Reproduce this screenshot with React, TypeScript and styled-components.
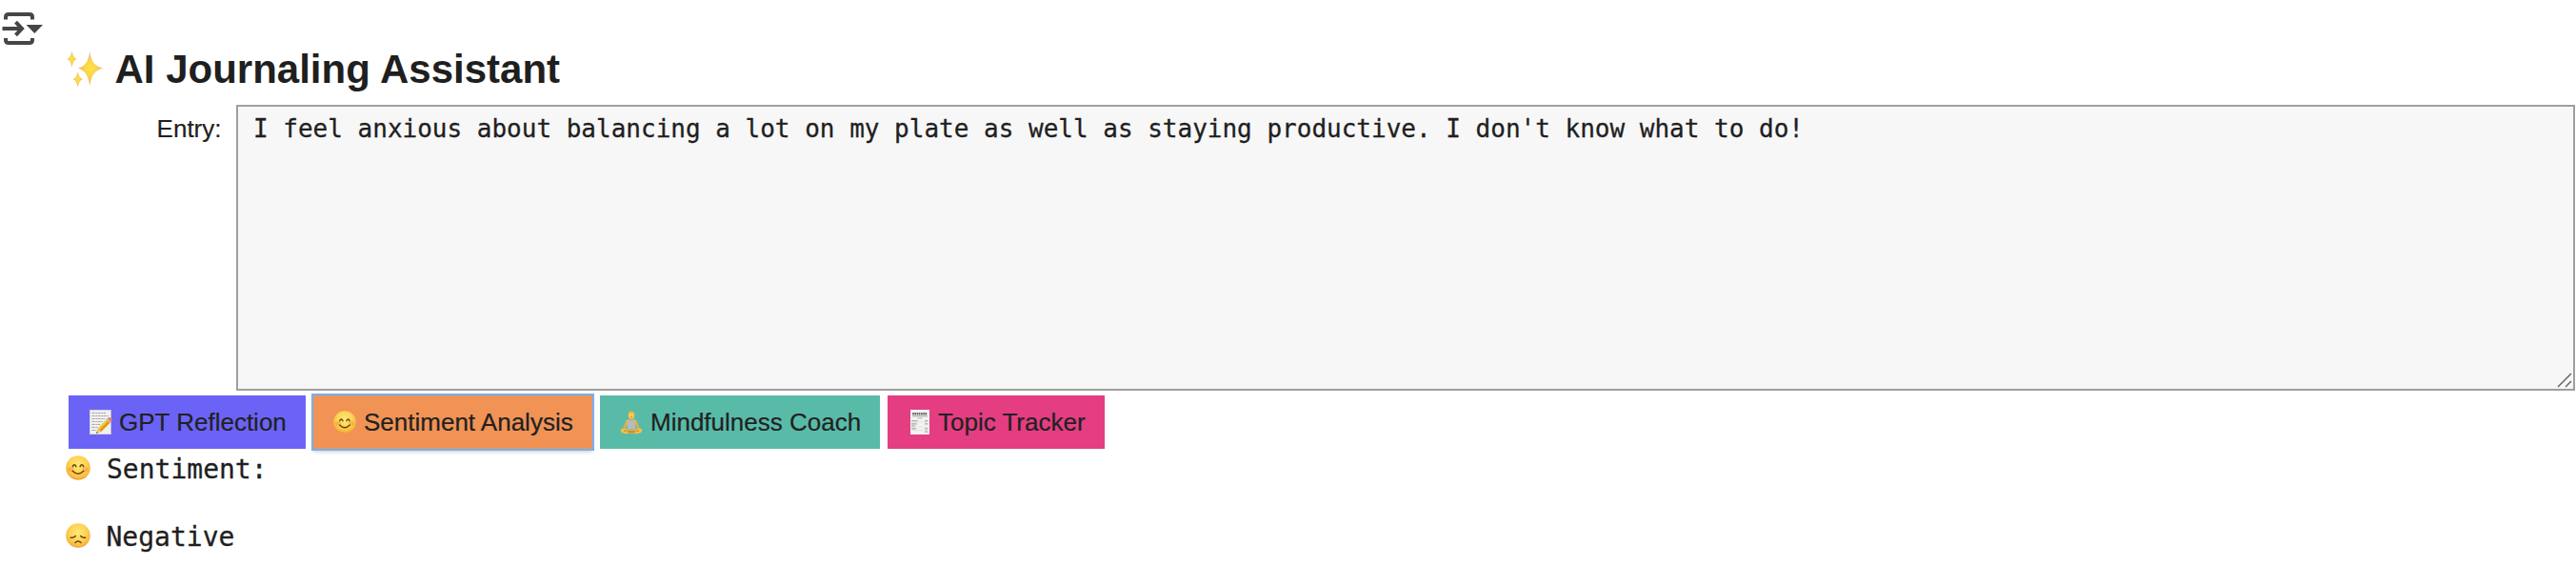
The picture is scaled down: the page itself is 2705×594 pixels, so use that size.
import React from "react";
import styled, { createGlobalStyle } from "styled-components";

const GlobalStyle = createGlobalStyle`
  *, *::before, *::after { box-sizing: border-box; }
  body {
    margin: 0;
    background: #ffffff;
    color: #1f1f1f;
    font-family: "Liberation Sans", Arial, sans-serif;
  }
`;

const Cell = styled.main`
  display: flex;
  align-items: flex-start;
  width: 100%;
  height: 594px;
  overflow: hidden;
`;

const Gutter = styled.aside`
  flex: 0 0 68px;
  padding: 13px 0 0 2px;
`;

const Output = styled.section`
  flex: 1;
  min-width: 0;
  padding-top: 48px;
`;

const Title = styled.h2`
  display: flex;
  align-items: center;
  height: 48px;
  margin: 0 0 14px;
  padding-left: 2px;
  font-size: 42px;
  line-height: 48px;
  font-weight: 700;
  letter-spacing: 0;
  white-space: nowrap;
`;

const TitleText = styled.span`
  margin-left: 11.5px;
  padding-top: 2px;
`;

const EntryRow = styled.div`
  display: flex;
  align-items: flex-start;
  height: 300px;
  margin-right: 1px;
`;

const EntryLabel = styled.label`
  flex: 0 0 180px;
  padding: 9px 15.5px 0 0;
  text-align: right;
  font-size: 26px;
  line-height: 32px;
  -webkit-text-stroke: 0.2px currentColor;
`;

const EntryBox = styled.div`
  position: relative;
  flex: 1;
  height: 300px;
  padding: 7px 16px;
  border: 2px solid #9e9e9e;
  background: #f7f7f7;
  font-family: "DejaVu Sans Mono", monospace;
  font-size: 26px;
  line-height: 32px;
  white-space: pre-wrap;
  -webkit-text-stroke: 0.3px currentColor;
`;

const ResizeGrip = styled.svg`
  position: absolute;
  right: 1px;
  bottom: 1px;
`;

const Actions = styled.div`
  display: flex;
  gap: 8px;
  margin: 5px 0 0 4px;
`;

const ActionButton = styled.button<{
  $color: string;
  $width: number;
  $focused?: boolean;
}>`
  display: flex;
  align-items: center;
  width: ${(p) => p.$width}px;
  height: 56px;
  padding: 0 0 0 20px;
  border: 0;
  background: ${(p) => p.$color};
  color: #212121;
  font-family: inherit;
  font-size: 26px;
  line-height: 32px;
  white-space: nowrap;
  -webkit-text-stroke: 0.2px currentColor;
  outline: ${(p) => (p.$focused ? "2px solid #73b1f4" : "none")};
  box-shadow: ${(p) => (p.$focused ? "0 3px 4px 0 rgba(0, 0, 0, 0.22)" : "none")};
`;

const ButtonText = styled.span`
  margin-left: 8px;
`;

const Result = styled.div`
  margin-top: 3px;
  font-family: "DejaVu Sans Mono", monospace;
  font-size: 28px;
  -webkit-text-stroke: 0.3px currentColor;
`;

const ResultLine = styled.p`
  display: flex;
  align-items: center;
  height: 34px;
  margin: 0 0 37px;
  line-height: 34px;
`;

const ResultText = styled.span<{ $gap: number }>`
  margin-left: ${(p) => p.$gap}px;
  padding-top: 4px;
`;

const OutputIcon = () => (
  <svg width="44" height="35" viewBox="2 13 44 35">
    <g fill="none" stroke="#444746" strokeWidth="4">
      <path d="M6 20.5V18Q6 15 9 15H31Q34 15 34 18V20.5" />
      <path d="M6 40V42Q6 45 9 45H31Q34 45 34 42V40" />
      <path d="M2.5 30H22" />
      <path d="M16.5 23.2L23 30L16.5 36.8" />
    </g>
    <path d="M27.5 26H45L36.3 35Z" fill="#444746" />
  </svg>
);

const Sparkles = () => (
  <svg width="39" height="39" viewBox="0 0 39 39">
    <defs>
      <radialGradient id="spark">
        <stop offset="0" stopColor="#ffe24a" />
        <stop offset="0.5" stopColor="#f8d34c" />
        <stop offset="1" stopColor="#efa568" />
      </radialGradient>
    </defs>
    <g fill="url(#spark)">
      <path d="M24.2 1Q26 17 38.5 18.5Q26 21 24.2 37.5Q22.4 21 11.5 18.5Q22.4 17 24.2 1Z" />
      <path d="M5.5 0.5Q6.8 8 10.5 9Q6.8 10.2 5.5 17.5Q4.2 10.2 0.5 9Q4.2 8 5.5 .5Z" />
      <path d="M11.7 22.5Q13 29 17 30Q13 31.5 11.7 38.5Q10.4 31.5 6.5 30Q10.4 29 11.7 22.5Z" />
    </g>
  </svg>
);

const FaceFill = ({ id }: { id: string }) => (
  <defs>
    <radialGradient id={id} cx="50%" cy="38%" r="64%">
      <stop offset="0" stopColor="#ffe978" />
      <stop offset="0.55" stopColor="#fdd354" />
      <stop offset="0.83" stopColor="#f8ba3f" />
      <stop offset="1" stopColor="#e79430" />
    </radialGradient>
  </defs>
);

const SmilingFace = ({ size, id }: { size: number; id: string }) => (
  <svg width={size} height={size} viewBox="0 0 26 26">
    <FaceFill id={id} />
    <circle cx="13" cy="13" r="12.8" fill={`url(#${id})`} />
    <ellipse cx="5.3" cy="14.5" rx="3.4" ry="2.6" fill="#f58b37" opacity="0.4" />
    <ellipse cx="20.7" cy="14.5" rx="3.4" ry="2.6" fill="#f58b37" opacity="0.4" />
    <g fill="none" stroke="#6b400c" strokeLinecap="round" strokeWidth="1.5">
      <path d="M7.3 11.6Q9.1 7.8 10.9 11.6" />
      <path d="M15.1 11.6Q16.9 7.8 18.7 11.6" />
      <path d="M7.2 16.3Q13 22.2 18.8 16.3" />
    </g>
  </svg>
);

const SadFace = () => (
  <svg width="26" height="26" viewBox="0 0 26 26">
    <FaceFill id="sad" />
    <circle cx="13" cy="13" r="12.8" fill="url(#sad)" />
    <g fill="none" stroke="#6b400c" strokeLinecap="round" strokeWidth="1.5">
      <path d="M5.3 15.2Q8.5 15.8 10.3 13.5" />
      <path d="M20.7 15.2Q17.5 15.8 15.7 13.5" />
      <path d="M10 20.5Q13 17.5 16 20.5" />
    </g>
  </svg>
);

const Memo = () => (
  <svg width="24" height="26" viewBox="0 0 24 26">
    <rect x="0.3" y="0.3" width="22" height="25.4" fill="#f1f1ef" stroke="#d9d9dc" strokeWidth="0.6" />
    <g stroke="#a5a5a5" strokeWidth="1" strokeDasharray="3 0.8 1.6 0.6">
      <path d="M2.5 3.5H17M2.5 6.5H20M2.5 9.5H16M2.5 12.5H14M2.5 15.5H11M2.5 18.5H9M2.5 21.5H7" />
    </g>
    <path d="M7.2 24.8L8.6 19.8L18.5 9.6L22.2 13L12.2 23Z" fill="#f7c52d" />
    <path d="M10.3 21.2L20.2 11.2L22.2 13L12.2 23Z" fill="#d99a1d" />
    <path d="M7.2 24.8L8.6 19.8L12.2 23Z" fill="#e9c797" />
    <path d="M7.2 24.8L7.7 23L9 24.2Z" fill="#333333" />
    <path d="M17.5 10.6L18.8 9.3L22.5 12.7L21.2 14Z" fill="#b9bdc3" />
    <path d="M18.8 9.3L20.2 8Q21.5 7.5 23 9Q24.2 10.5 23.6 11.5L22.5 12.7Z" fill="#ef7968" />
  </svg>
);

const Lotus = () => (
  <svg width="24" height="25" viewBox="0 0 24 25">
    <path d="M8.2 9.5Q5.8 9.5 5.5 13L3.5 18L1.5 20.2L4 20.6L6.8 16L9 13H15L17.2 16L20 20.6L22.5 20.2L20.5 18L18.5 13Q18.2 9.5 15.8 9.5Z" fill="#e8b044" />
    <path d="M10.4 7H13.6V10.5H10.4Z" fill="#dda23a" />
    <ellipse cx="12" cy="4.8" rx="3.2" ry="3.9" fill="#f8cc57" />
    <path d="M8.7 4.5Q8.3 .4 12 .4Q15.7 .4 15.3 4.5Q14.2 2.4 12 2.6Q9.8 2.4 8.7 4.5Z" fill="#efb03a" />
    <path d="M10.7 6.5Q12 7.5 13.3 6.5" fill="none" stroke="#9b6418" strokeWidth="0.6" />
    <path d="M8 9.6L9.4 9.2Q12 12 14.6 9.2L16 9.6L16.4 19.5H7.6Z" fill="#b9b9c1" />
    <path d="M1 19.2Q5 18 8 19.2L12 20.5L16 19.2Q19 18 23 19.2Q24 22.5 21 23.5Q16 25 12 23.2Q8 25 3 23.5Q0 22.5 1 19.2Z" fill="#f3bd49" />
    <path d="M4 21.2Q9 20.3 12 22Q15 20.3 20 21.2M8 23Q12 21.5 16 23" fill="none" stroke="#b37b24" strokeWidth="0.8" />
  </svg>
);

const Receipt = () => (
  <svg width="20" height="26" viewBox="0 0 20 26">
    <rect width="20" height="26" fill="#f2f2f1" />
    <path d="M2.2 4.3H17.8" stroke="#666666" strokeWidth="2.6" strokeDasharray="1.6 0.6" />
    <path d="M2 6.8H18" stroke="#888888" strokeWidth="0.7" />
    <path d="M7.5 8.8H12.5" stroke="#b5b5b5" strokeWidth="1" />
    <g stroke="#999999" strokeWidth="1">
      <path d="M1 11.8H7.5M15 11.8H18.5M1 14.9H7M15 14.9H18.5M1 17H5M1 19.9H6M15 19.9H18.5M15 23.1H18.5" />
    </g>
    <path d="M1 13.1H19M1 18.2H19M1 21.5H19" stroke="#d5d5d5" strokeWidth="0.5" />
  </svg>
);

const Spacer = styled.span<{ $left: number; $right: number }>`
  display: flex;
  margin-left: ${(p) => p.$left}px;
  margin-right: ${(p) => p.$right}px;
`;

export default function App() {
  return (
    <>
      <GlobalStyle />
      <Cell>
        <Gutter>
          <OutputIcon />
        </Gutter>
        <Output>
          <Title>
            <Sparkles />
            <TitleText>AI Journaling Assistant</TitleText>
          </Title>
          <EntryRow>
            <EntryLabel>Entry:</EntryLabel>
            <EntryBox>
              I feel anxious about balancing a lot on my plate as well as staying productive. I don't know what to do!
              <ResizeGrip width="16" height="16" viewBox="0 0 16 16">
                <path d="M1 15L15 1M9 15L15 9" stroke="#666666" strokeWidth="1.5" />
              </ResizeGrip>
            </EntryBox>
          </EntryRow>
          <Actions>
            <ActionButton $color="#6b63f6" $width={249}>
              <Spacer $left={2} $right={-1}><Memo /></Spacer>
              <ButtonText>GPT Reflection</ButtonText>
            </ActionButton>
            <ActionButton $color="#f09355" $width={293} $focused>
              <Spacer $left={1} $right={0}><SmilingFace size={24} id="smile-button" /></Spacer>
              <ButtonText>Sentiment Analysis</ButtonText>
            </ActionButton>
            <ActionButton $color="#58bba8" $width={294}>
              <Spacer $left={1} $right={0}><Lotus /></Spacer>
              <ButtonText>Mindfulness Coach</ButtonText>
            </ActionButton>
            <ActionButton $color="#e43d82" $width={228}>
              <Spacer $left={4} $right={1}><Receipt /></Spacer>
              <ButtonText>Topic Tracker</ButtonText>
            </ActionButton>
          </Actions>
          <Result>
            <ResultLine>
              <Spacer $left={1} $right={0}><SmilingFace size={26} id="smile-result" /></Spacer>
              <ResultText $gap={17}>Sentiment:</ResultText>
            </ResultLine>
            <ResultLine>
              <Spacer $left={1} $right={0}><SadFace /></Spacer>
              <ResultText $gap={16.5}>Negative</ResultText>
            </ResultLine>
          </Result>
        </Output>
      </Cell>
    </>
  );
}
